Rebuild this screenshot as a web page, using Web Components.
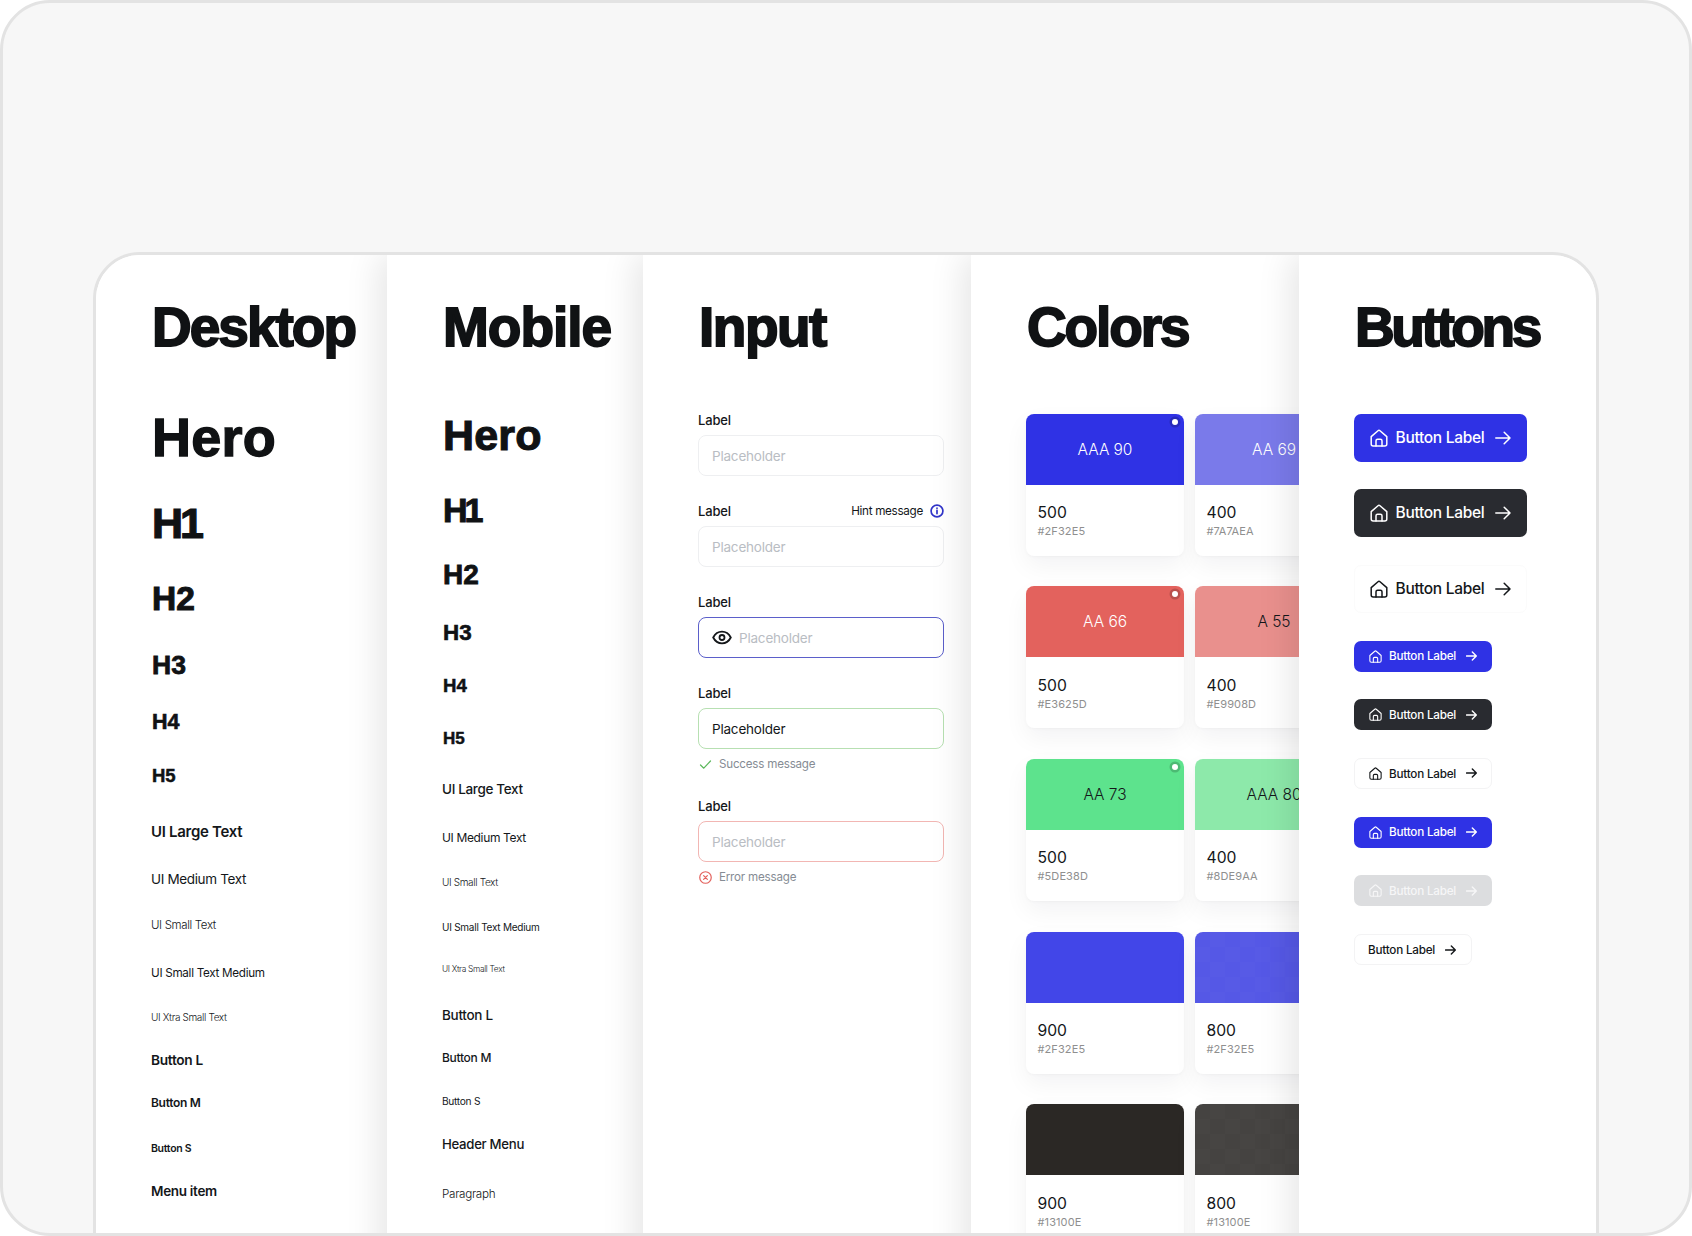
<!DOCTYPE html>
<html><head><meta charset="utf-8">
<style>
html,body{margin:0;padding:0;background:#fff;height:1236px;overflow:hidden}
body{font-family:Inter,"Liberation Sans",sans-serif;color:#14171a}
</style></head><body>
<ds-frame>
  <ds-column heading="Desktop" style="--w:291px;--px:55px;--tls:-2px">
    <type-row h style="--mt:53px;--fs:54px;--ls:.2px;--st:1.3px">Hero</type-row>
    <type-row h style="--mt:38px;--fs:43px;--ls:-3px;--st:1.2px">H1</type-row>
    <type-row h style="--mt:37px;--fs:33.5px;--ls:0;--st:1px">H2</type-row>
    <type-row h style="--mt:36px;--fs:26.5px;--ls:.1px;--st:.8px">H3</type-row>
    <type-row h style="--mt:34px;--fs:21.5px;--ls:0;--st:.6px">H4</type-row>
    <type-row h style="--mt:33.5px;--fs:18.5px;--ls:0;--st:.5px">H5</type-row>
    <type-row style="--mt:36px;--fs:15px;--fw:600;--ls:-.3px">UI Large Text</type-row>
    <type-row style="--mt:27.5px;--fs:13.5px;--fw:400;--ls:-.35px">UI Medium Text</type-row>
    <type-row style="--mt:26px;--fs:11.5px;--fw:350;--ls:-.35px">UI Small Text</type-row>
    <type-row style="--mt:28px;--fs:11.7px;--fw:400;--ls:-.3px">UI Small Text Medium</type-row>
    <type-row style="--mt:23.5px;--fs:10px;--fw:350;--ls:-.35px">UI Xtra Small Text</type-row>
    <type-row style="--mt:23px;--fs:13.7px;--fw:600;--ls:-.3px">Button L</type-row>
    <type-row style="--mt:23px;--fs:12px;--fw:600;--ls:-.3px">Button M</type-row>
    <type-row style="--mt:26.5px;--fs:10.5px;--fw:600;--ls:-.3px">Button S</type-row>
    <type-row style="--mt:21.5px;--fs:13.5px;--fw:600;--ls:-.3px">Menu item</type-row>
  </ds-column>
  <ds-column heading="Mobile" style="--w:256px;--px:55px;--tls:-1px">
    <type-row h style="--mt:57px;--fs:43px;--ls:.2px;--st:1.1px">Hero</type-row>
    <type-row h style="--mt:36px;--fs:34px;--ls:-3px;--st:1px">H1</type-row>
    <type-row h style="--mt:34px;--fs:28px;--ls:0;--st:.8px">H2</type-row>
    <type-row h style="--mt:33px;--fs:22.4px;--ls:0;--st:.6px">H3</type-row>
    <type-row h style="--mt:32.5px;--fs:18.6px;--ls:0;--st:.5px">H4</type-row>
    <type-row h style="--mt:34.5px;--fs:17px;--ls:0;--st:.5px">H5</type-row>
    <type-row style="--mt:32px;--fs:13.5px;--fw:550;--ls:-.35px">UI Large Text</type-row>
    <type-row style="--mt:29.5px;--fs:12px;--fw:400;--ls:-.35px">UI Medium Text</type-row>
    <type-row style="--mt:24px;--fs:10px;--fw:350;--ls:-.35px">UI Small Text</type-row>
    <type-row style="--mt:25px;--fs:10px;--fw:400;--ls:-.25px">UI Small Text Medium</type-row>
    <type-row style="--mt:22px;--fs:8.3px;--fw:350;--ls:-.3px">UI Xtra Small Text</type-row>
    <type-row style="--mt:26px;--fs:13.5px;--fw:450;--ls:-.3px">Button L</type-row>
    <type-row style="--mt:22.5px;--fs:12px;--fw:450;--ls:-.3px">Button M</type-row>
    <type-row style="--mt:23.5px;--fs:10.2px;--fw:400;--ls:-.3px">Button S</type-row>
    <type-row style="--mt:23px;--fs:13.2px;--fw:450;--ls:-.3px">Header Menu</type-row>
    <type-row style="--mt:29.5px;--fs:11.7px;--fw:350;--ls:-.3px">Paragraph</type-row>
  </ds-column>
  <ds-column heading="Input" style="--w:328px;--px:55px;--tls:-1.5px">
    <form-stack>
      <form-field label="Label" placeholder="Placeholder"></form-field>
      <form-field label="Label" placeholder="Placeholder" hint="Hint message"></form-field>
      <form-field label="Label" placeholder="Placeholder" state="focus"></form-field>
      <form-field label="Label" placeholder="Placeholder" state="success" message="Success message"></form-field>
      <form-field label="Label" placeholder="Placeholder" state="error" message="Error message"></form-field>
    </form-stack>
  </ds-column>
  <ds-column heading="Colors" style="--w:328px;--px:55px;--tls:-2.1px">
    <swatch-grid>
      <swatch-card color="#2f32e5" grade="AAA 90" num="500" hex="#2F32E5" dot></swatch-card>
      <swatch-card color="#7a7aea" grade="AA 69" num="400" hex="#7A7AEA"></swatch-card>
      <swatch-card color="#e3625d" grade="AA 66" num="500" hex="#E3625D" dot></swatch-card>
      <swatch-card color="#e9908d" grade="A 55" dark num="400" hex="#E9908D"></swatch-card>
      <swatch-card color="#5de38d" grade="AA 73" dark num="500" hex="#5DE38D" dot></swatch-card>
      <swatch-card color="#8de9aa" grade="AAA 80" dark num="400" hex="#8DE9AA"></swatch-card>
      <swatch-card color="#4246e8" num="900" hex="#2F32E5"></swatch-card>
      <swatch-card color="#5558e6" checker num="800" hex="#2F32E5"></swatch-card>
      <swatch-card color="#2b2825" num="900" hex="#13100E"></swatch-card>
      <swatch-card color="#454341" checker num="800" hex="#13100E"></swatch-card>
    </swatch-grid>
  </ds-column>
  <ds-column heading="Buttons" style="--w:297px;--px:55px;--tls:-3.4px">
    <button-stack>
      <ds-button size="l" variant="primary">Button Label</ds-button>
      <ds-button size="l" variant="dark">Button Label</ds-button>
      <ds-button size="l" variant="ghost">Button Label</ds-button>
      <ds-button size="s" variant="primary">Button Label</ds-button>
      <ds-button size="s" variant="dark">Button Label</ds-button>
      <ds-button size="s" variant="ghost">Button Label</ds-button>
      <ds-button size="s" variant="primary">Button Label</ds-button>
      <ds-button size="s" variant="disabled">Button Label</ds-button>
      <ds-button size="s" variant="ghost" noicon>Button Label</ds-button>
    </button-stack>
  </ds-column>
</ds-frame>
<script>
const HOME=`<svg viewBox="0 0 18 18" fill="none" stroke="currentColor" stroke-width="1.5" stroke-linejoin="round" stroke-linecap="round"><path d="M1.2 7.6 8 1.7a1.5 1.5 0 0 1 2 0l6.8 5.9v7.4a2 2 0 0 1-2 2H3.2a2 2 0 0 1-2-2z"/><path d="M6 17v-5.2a1.6 1.6 0 0 1 1.6-1.6h2.8a1.6 1.6 0 0 1 1.6 1.6V17"/></svg>`;
const ARROW=`<svg viewBox="0 0 16 14" fill="none" stroke="currentColor" stroke-width="1.5" stroke-linecap="round" stroke-linejoin="round"><path d="M.8 7h14.2M9.2 1.2 15 7l-5.8 5.8"/></svg>`;
const def=(name,css,html)=>{
  customElements.define(name,class extends HTMLElement{
    constructor(){super();this.attachShadow({mode:'open'});}
    connectedCallback(){
      const h=typeof html==='function'?html(this):html;
      this.shadowRoot.innerHTML=`<style>${css}</style>${h}`;
    }
  });
};
def('ds-frame',`
:host{display:block;box-sizing:border-box;width:1692px;height:1236px;background:#f7f7f7;border:3px solid #e3e3e3;border-radius:50px;overflow:hidden;padding:249px 90px 0}
.panel{display:flex;height:1100px;background:#fff;border:3px solid #e3e3e3;border-radius:47px;overflow:hidden}
`,`<div class="panel"><slot></slot></div>`);
def('ds-column',`
:host{display:block;position:relative;flex:none;box-sizing:border-box;width:var(--w);padding:42px 0 0 var(--px);background:#fff;box-shadow:-8px 0 32px rgba(0,0,0,.1)}
:host(:first-child){box-shadow:none}
h2{margin:0 0 0 1px;font:700 55px/60px "Liberation Sans",Arial,sans-serif;letter-spacing:var(--tls);color:#101214;-webkit-text-stroke:1.8px #101214;white-space:nowrap}
`,el=>`<h2>${el.getAttribute('heading')}</h2><slot></slot>`);
def('type-row',`
:host{display:block;margin-top:var(--mt);height:20px;line-height:20px;font-size:var(--fs);font-weight:var(--fw);letter-spacing:var(--ls);white-space:nowrap;font-family:Inter,"Liberation Sans",sans-serif;color:#14171a}
:host([h]){height:var(--fs);margin-left:1px;line-height:1;font-family:"Liberation Sans",Arial,sans-serif;font-weight:700;color:#101214;-webkit-text-stroke:var(--st) #101214}
`,`<slot></slot>`);
def('form-stack',`:host{display:flex;flex-direction:column;gap:27px;margin-top:55px;width:246px}`,`<slot></slot>`);
def('form-field',`
:host{display:block;font-family:Inter,"Liberation Sans",sans-serif}
.top{display:flex;justify-content:space-between;align-items:center;height:16px;font-size:13px;font-weight:450;letter-spacing:-.15px;color:#14171a}
.hint{display:flex;align-items:center;gap:7px;font-size:11.7px;font-weight:400;letter-spacing:-.3px}
.hint svg{width:14px;height:14px;display:block}
.box{box-sizing:border-box;display:flex;align-items:center;gap:7px;height:41px;margin-top:7px;padding:0 13px;border:1px solid #eeeff1;border-radius:8px;font-size:13.5px;letter-spacing:-.2px;color:#b9bdc3;background:#fff}
.eye{width:20px;height:15px;display:block;color:#14171a}
.focus{border:1.5px solid #5b5fca}
.success{border-color:#b7e0b2;color:#14171a}
.error{border-color:#f2b6b3}
.msg{display:flex;align-items:center;gap:7px;height:14px;margin-top:8px;padding-left:1px;font-size:11.6px;letter-spacing:-.2px;color:#868c94}
.msg svg{width:13px;height:13px;display:block}
`,el=>{
  const st=el.getAttribute('state')||'',hint=el.getAttribute('hint'),m=el.getAttribute('message');
  const info=`<svg viewBox="0 0 14 14" fill="none" stroke="#3135c9" stroke-width="1.7" stroke-linecap="round"><circle cx="7" cy="7" r="5.9"/><path d="M7 6.4v3.2M7 4.2v.1"/></svg>`;
  const eye=`<svg class="eye" viewBox="0 0 20 15" fill="none" stroke="currentColor" stroke-width="1.8"><path d="M1.2 7.5c2-3.9 5-5.9 8.8-5.9s6.8 2 8.8 5.9c-2 3.9-5 5.900-8.800 5.900S3.200 11.400 1.200 7.500z"/><circle cx="10" cy="7.5" r="2.5"/></svg>`;
  const check=`<svg viewBox="0 0 13 13" fill="none" stroke="#5cb85c" stroke-width="1.2" stroke-linecap="round" stroke-linejoin="round"><path d="M1.5 7 4.8 10.2 11.5 3"/></svg>`;
  const err=`<svg viewBox="0 0 14 14" fill="none" stroke="#e3625d" stroke-width="1.3" stroke-linecap="round"><circle cx="7" cy="7" r="6.2"/><path d="M5 5l4 4M9 5l-4 4"/></svg>`;
  return `<div class="top"><span>${el.getAttribute('label')}</span>${hint?`<span class="hint">${hint}${info}</span>`:''}</div>
  <div class="box ${st}">${st==='focus'?eye:''}<span>${el.getAttribute('placeholder')}</span></div>
  ${m?`<div class="msg">${st==='success'?check:err}<span>${m}</span></div>`:''}`;
});
def('swatch-grid',`:host{display:grid;grid-template-columns:158px 158px;column-gap:11px;row-gap:30.7px;margin-top:56.5px}`,`<slot></slot>`);
def('swatch-card',`
:host{display:block;position:relative;height:142px;border-radius:8px;background:#fff;box-shadow:0 10px 24px rgba(20,20,30,.05),0 1px 3px rgba(20,20,30,.03);font-family:Inter,"Liberation Sans",sans-serif}
.sw{height:71px;display:flex;align-items:center;justify-content:center;border-radius:8px 8px 0 0;font-size:15.5px;font-weight:350;letter-spacing:-.05px;color:#fff}
.dark{color:#14171a}
.chk{background-image:repeating-conic-gradient(rgba(255,255,255,.012) 0 25%,transparent 0 50%);background-size:30px 30px}
.dot{position:absolute;top:5px;right:6px;width:6px;height:6px;border-radius:50%;background:#fff;box-shadow:0 0 0 2.5px rgba(0,0,0,.18)}
.num{margin:19.5px 0 0 11.5px;font-size:15.7px;line-height:18px;color:#14171a}
.hex{margin:2px 0 0 11.5px;font-size:11px;line-height:14px;letter-spacing:.1px;color:#8f8f8f}
`,el=>`<div class="sw ${el.hasAttribute('dark')?'dark':''} ${el.hasAttribute('checker')?'chk':''}" style="background-color:${el.getAttribute('color')}">${el.getAttribute('grade')||''}</div>${el.hasAttribute('dot')?'<span class="dot"></span>':''}
<div class="num">${el.getAttribute('num')}</div><div class="hex">${el.getAttribute('hex')}</div>`);
def('button-stack',`:host{display:flex;flex-direction:column;align-items:flex-start;gap:27.7px;margin-top:56.5px}`,`<slot></slot>`);
def('ds-button',`
:host{display:block;font-family:Inter,"Liberation Sans",sans-serif}
.b{box-sizing:border-box;display:flex;align-items:center;border-radius:7px;border:1px solid transparent;white-space:nowrap;line-height:1}
.l{width:173px;height:48px;padding:0 15px;font-size:15.5px;font-weight:500;letter-spacing:-.3px}
.l .i{width:18px;height:18px;margin-right:7.5px}.l .a{width:16px;height:14px;margin-left:10.5px}
.s{width:138px;height:31px;padding:0 14px;font-size:11.7px;font-weight:550;letter-spacing:-.22px}
.s span{padding-top:2px}
.s .i{width:13px;height:13px;margin-right:7px}.s .a{width:11px;height:10px;margin-left:9.5px;stroke-width:2}
.s.n{width:118px;padding-left:13px}
svg{display:block;flex:none}
.primary{background:#2f32e5;color:#fff}
.dark{background:#292b30;color:#fff}
.ghost{background:#fff;color:#14171a;border-color:#f3f3f4}
.l.ghost{border-color:#fbfbfb}
.disabled{background:#dcdddf;color:#f6f6f7}
`,el=>{
  const s=el.getAttribute('size'),v=el.getAttribute('variant'),n=el.hasAttribute('noicon');
  return `<div class="b ${s} ${v} ${n?'n':''}">${n?'':HOME.replace('<svg','<svg class="i"')}<span><slot></slot></span>${ARROW.replace('<svg','<svg class="a"')}</div>`;
});
</script>
</body></html>
